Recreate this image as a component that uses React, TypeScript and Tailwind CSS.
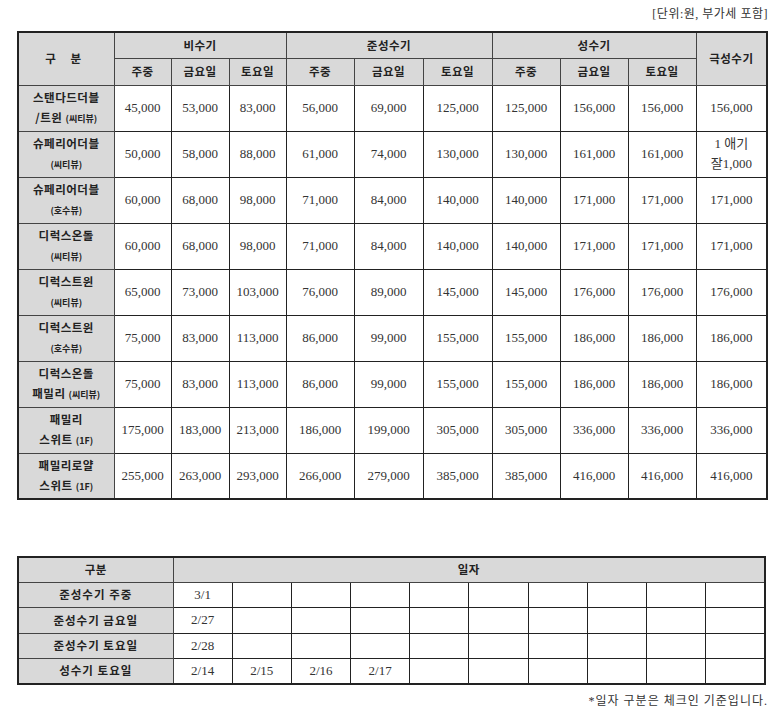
const serif = { fontFamily: '"Liberation Serif", "Noto Sans CJK KR", serif' };

const HEAD_FONT = "font-['Noto_Sans_CJK_KR',sans-serif]";

type Room = { name: string; sub: string; tag: string; prices: string[] };

const rooms: Room[] = [
  { name: "스탠다드더블", sub: "/트윈", tag: "(씨티뷰)", prices: ["45,000", "53,000", "83,000", "56,000", "69,000", "125,000", "125,000", "156,000", "156,000", "156,000"] },
  { name: "슈페리어더블", sub: "", tag: "(씨티뷰)", prices: ["50,000", "58,000", "88,000", "61,000", "74,000", "130,000", "130,000", "161,000", "161,000", "1 애기\n잘1,000"] },
  { name: "슈페리어더블", sub: "", tag: "(호수뷰)", prices: ["60,000", "68,000", "98,000", "71,000", "84,000", "140,000", "140,000", "171,000", "171,000", "171,000"] },
  { name: "디럭스온돌", sub: "", tag: "(씨티뷰)", prices: ["60,000", "68,000", "98,000", "71,000", "84,000", "140,000", "140,000", "171,000", "171,000", "171,000"] },
  { name: "디럭스트윈", sub: "", tag: "(씨티뷰)", prices: ["65,000", "73,000", "103,000", "76,000", "89,000", "145,000", "145,000", "176,000", "176,000", "176,000"] },
  { name: "디럭스트윈", sub: "", tag: "(호수뷰)", prices: ["75,000", "83,000", "113,000", "86,000", "99,000", "155,000", "155,000", "186,000", "186,000", "186,000"] },
  { name: "디럭스온돌", sub: "패밀리", tag: "(씨티뷰)", prices: ["75,000", "83,000", "113,000", "86,000", "99,000", "155,000", "155,000", "186,000", "186,000", "186,000"] },
  { name: "패밀리", sub: "스위트", tag: "(1F)", prices: ["175,000", "183,000", "213,000", "186,000", "199,000", "305,000", "305,000", "336,000", "336,000", "336,000"] },
  { name: "패밀리로얄", sub: "스위트", tag: "(1F)", prices: ["255,000", "263,000", "293,000", "266,000", "279,000", "385,000", "385,000", "416,000", "416,000", "416,000"] },
];

const colWidths = [96, 57, 58, 57, 68, 69, 69, 68, 68, 68, 71];

const dateRows: { label: string; dates: string[] }[] = [
  { label: "준성수기 주중", dates: ["3/1"] },
  { label: "준성수기 금요일", dates: ["2/27"] },
  { label: "준성수기 토요일", dates: ["2/28"] },
  { label: "성수기 토요일", dates: ["2/14", "2/15", "2/16", "2/17"] },
];

const th = `border border-[#444] bg-[#d9d9d9] text-center align-middle text-[11.5px] font-bold text-[#222] tracking-[0.5px] ${HEAD_FONT}`;
const td = "border border-[#222] bg-white text-center align-middle text-[13px] text-[#333] leading-[20px]";

export default function App() {
  return (
    <div className="w-[782px] h-[715px] bg-white">
      <p className="pt-[6px] pr-[14px] text-right text-[12px] leading-[16px] text-[#333] tracking-[0.5px]" style={serif}>
        [단위:원, 부가세 포함]
      </p>

      <table className="ml-[17px] mt-[9px] w-[749px] table-fixed border-collapse border-2 border-[#222]">
        <colgroup>
          {colWidths.map((w, i) => (
            <col key={i} style={{ width: w }} />
          ))}
        </colgroup>
        <thead>
          <tr className="h-[26px]">
            <th rowSpan={2} className={`${th} tracking-[6px]`}>구 분</th>
            <th colSpan={3} className={th}>비수기</th>
            <th colSpan={3} className={th}>준성수기</th>
            <th colSpan={3} className={th}>성수기</th>
            <th rowSpan={2} className={th}>극성수기</th>
          </tr>
          <tr className="h-[27px]">
            {["주중", "금요일", "토요일", "주중", "금요일", "토요일", "주중", "금요일", "토요일"].map((d, i) => (
              <th key={i} className={th}>{d}</th>
            ))}
          </tr>
        </thead>
        <tbody>
          {rooms.map((r, i) => (
            <tr key={i} className="h-[46px]">
              <th className={`${th} leading-[20px]`}>
                <div>{r.name}</div>
                <div>
                  {r.sub && <span>{r.sub} </span>}
                  <span className="text-[9px] tracking-normal">{r.tag}</span>
                </div>
              </th>
              {r.prices.map((p, j) => (
                <td key={j} className={`${td} whitespace-pre-line`} style={serif}>
                  {p}
                </td>
              ))}
            </tr>
          ))}
        </tbody>
      </table>

      <table className="ml-[17px] mt-[56px] w-[747px] table-fixed border-collapse border-2 border-[#222]">
        <colgroup>
          <col style={{ width: 155 }} />
          {Array.from({ length: 10 }).map((_, i) => (
            <col key={i} style={{ width: 59.2 }} />
          ))}
        </colgroup>
        <tbody>
          <tr className="h-[25.4px]">
            <th className={th}>구분</th>
            <th colSpan={10} className={th}>일자</th>
          </tr>
          {dateRows.map((r, i) => (
            <tr key={i} className="h-[25.4px]">
              <th className={`${th} tracking-[1px]`}>{r.label}</th>
              {Array.from({ length: 10 }).map((_, j) => (
                <td key={j} className={td} style={serif}>
                  {r.dates[j] ?? ""}
                </td>
              ))}
            </tr>
          ))}
        </tbody>
      </table>

      <p className="mt-[8px] pr-[14px] text-right text-[12px] leading-[16px] text-[#333] tracking-[1px]" style={serif}>
        *일자 구분은 체크인 기준입니다.
      </p>
    </div>
  );
}
